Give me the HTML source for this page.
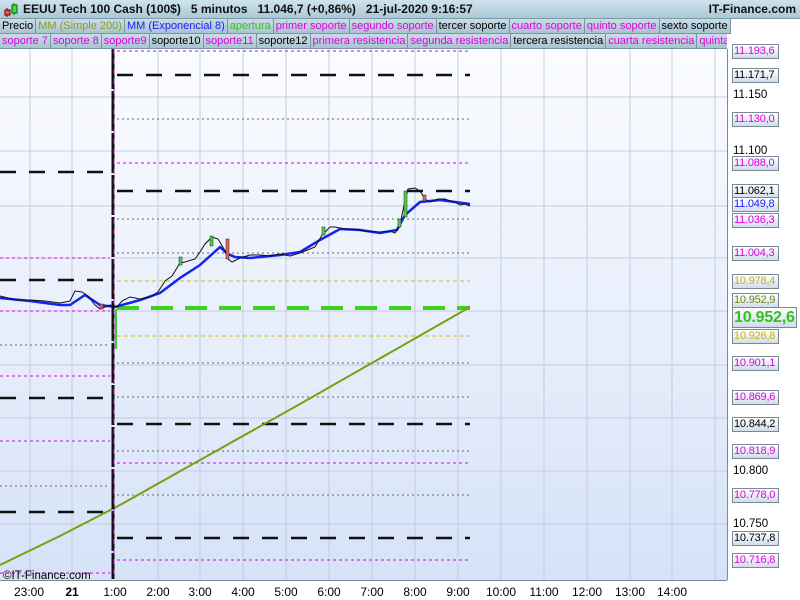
<!DOCTYPE html>
<html><head><meta charset="utf-8"><style>
*{margin:0;padding:0;box-sizing:border-box}
body{width:800px;height:600px;overflow:hidden;background:#fff;font-family:"Liberation Sans",sans-serif;position:relative}
.hdr{position:absolute;left:0;top:0;width:800px;height:19px;background:linear-gradient(#cfe3ec,#a9c8d6);border-bottom:1px solid #7f9aa8;font-weight:bold;font-size:12px;line-height:19px;color:#111}
.row{position:absolute;left:0;height:15px;display:flex;font-size:11px;line-height:14px}
.row span{background:linear-gradient(#c9dde6,#a8c4d1);border-right:1px solid #7a95a2;border-bottom:1px solid #7a95a2;padding:0 2px;white-space:nowrap}
.m{color:#e000e0}.k{color:#000}
.ax{position:absolute;font-size:11.5px;color:#000}
.lb{position:absolute;left:732px;width:47px;height:15px;border:1px solid #7a8a94;background:linear-gradient(#fff,#d2dcec);font-size:11px;line-height:13px;padding-left:1px;letter-spacing:-0.2px;white-space:nowrap;overflow:hidden}
.tl{position:absolute;top:585px;font-size:12px;transform:translateX(-50%)}
</style></head><body>
<div class="hdr"><svg style="position:absolute;left:3px;top:2px" width="16" height="16"><line x1="4" y1="6" x2="4" y2="15" stroke="#600"/><rect x="2" y="8" width="5" height="5" fill="#e55" stroke="#600"/><line x1="11" y1="1" x2="11" y2="13" stroke="#060"/><rect x="9" y="3" width="5" height="8" fill="#4d4" stroke="#060"/></svg><span style="position:absolute;left:23px">EEUU Tech 100 Cash (100$)&nbsp;&nbsp;&nbsp;5 minutos&nbsp;&nbsp;&nbsp;11.046,7 (+0,86%)&nbsp;&nbsp;&nbsp;21-jul-2020 9:16:57</span><span style="position:absolute;right:4px">IT-Finance.com</span></div>
<div class="row" style="top:19px"><span class="k">Precio</span><span style="color:#8a9e1e">MM (Simple 200)</span><span style="color:#1a1aff">MM (Exponencial 8)</span><span style="color:#2fc21a">apertura</span><span class="m">primer soporte</span><span class="m">segundo soporte</span><span class="k">tercer soporte</span><span class="m">cuarto soporte</span><span class="m">quinto soporte</span><span class="k">sexto soporte</span></div>
<div class="row" style="top:34px;width:727px;overflow:hidden"><span class="m">soporte 7</span><span class="m">soporte 8</span><span class="m">soporte9</span><span class="k">soporte10</span><span class="m">soporte11</span><span class="k">soporte12</span><span class="m">primera resistencia</span><span class="m">segunda resistencia</span><span class="k">tercera resistencia</span><span class="m">cuarta resistencia</span><span class="m">quinta resistencia</span></div>
<svg style="position:absolute;left:0;top:49px" width="800" height="551">
<defs><linearGradient id="bg" x1="0" y1="0" x2="0" y2="1"><stop offset="0" stop-color="#fbfcff"/><stop offset="1" stop-color="#d6e2f8"/></linearGradient></defs>
<rect x="0" y="0" width="727" height="531" fill="url(#bg)"/>
<line x1="727.5" y1="0" x2="727.5" y2="531" stroke="#7d8a94"/>
<line x1="0" y1="531.5" x2="727" y2="531.5" stroke="#7d8a94"/>
<g stroke="#c3cce0" stroke-width="1">
<path d="M0 48H727M0 102H727M0 157H727M0 209H727M0 262H727M0 316H727M0 369H727M0 422H727M0 475H727"/>
<path d="M30 0V531M72 0V531M158 0V531M200 0V531M243 0V531M286 0V531M329 0V531M372 0V531M415 0V531M458 0V531M501 0V531M544 0V531M587 0V531M630 0V531M672 0V531M715 0V531"/>
</g>
<g fill="none">
<g stroke="#e000e0" stroke-dasharray="3,3"><path d="M117 2H470M117 114H470M117 414H470M117 511H470M0 209H110M0 262H110M0 327H110M0 392H110M0 524H110"/></g>
<g stroke="#666" stroke-dasharray="2,3"><path d="M117 70H470M117 170H470M117 204H470M117 314H470M117 348H470M117 402H470M117 446H470M0 296H110M0 437H110"/></g>
<g stroke="#d0c000" stroke-dasharray="4,3"><path d="M117 232H470M117 287H470"/></g>
<g stroke="#111" stroke-width="2.5" stroke-dasharray="16,13"><path d="M117 26H470M117 142H470M117 375H470M117 489H470M0 123H110M0 231H110M0 349H110M0 463H110"/></g>
<path d="M117 259H470" stroke="#3bd11c" stroke-width="4" stroke-dasharray="22,12"/>
<path d="M0 516L60 487L120 456L200 411L300 355L400 298L470 258" stroke="#7aa010" stroke-width="2"/>
<path d="M0 249L30 252L60 256L70 256L85 246L100 256L115 258L140 251L160 244L180 229L200 216L220 198L228 205L235 208L250 209L280 206L300 203L320 191L340 180L360 181L380 184L397 181L405 166L420 153L440 151L470 155" stroke="#1525f0" stroke-width="2.5"/>
<path d="M0 247L8 249L15 251L30 251L45 252L60 254L70 252L75 242L82 243L88 247L95 256L100 260L105 258L110 256L117 258L122 252L130 248L140 250L150 248L158 243L165 232L172 227L180 214L185 213L195 210L200 203L205 195L212 188L218 190L224 200L228 210L232 213L240 209L250 206L260 206L270 207L280 205L290 207L300 204L310 200L315 198L322 186L330 178L335 178L345 180L355 180L365 182L380 183L390 182L395 184L400 175L405 152L408 140L415 139L420 142L425 150L430 153L438 150L445 150L450 152L455 153L460 156L465 155L470 157" stroke="#111" stroke-width="1"/>
<path d="M113 0V530" stroke="#111" stroke-width="3" stroke-dasharray="40,2"/>
<path d="M114 0V530" stroke="#e000e0" stroke-width="1" stroke-dasharray="5,5"/>
<path d="M116 260V300" stroke="#3bd11c" stroke-width="2"/>
</g>
<g fill="#4fd04a" stroke="#222" stroke-width="0.5"><rect x="404" y="142" width="3" height="26"/><rect x="398" y="170" width="3" height="8"/><rect x="322" y="178" width="3" height="8"/><rect x="210" y="187" width="3" height="10"/><rect x="179" y="208" width="3" height="8"/></g>
<g fill="#e56060" stroke="#222" stroke-width="0.5"><rect x="226" y="190" width="3" height="20"/><rect x="423" y="146" width="3" height="6"/><rect x="100" y="255" width="3" height="5"/></g>
<text x="3" y="530" font-size="11.5" font-family="Liberation Sans">©IT-Finance.com</text>
</svg>
<div class="ax" style="left:733px;top:89px">11.150</div>
<div class="ax" style="left:733px;top:145px">11.100</div>
<div class="ax" style="left:733px;top:465px">10.800</div>
<div class="ax" style="left:733px;top:518px">10.750</div>
<div class="lb m" style="top:44px">11.193,6</div>
<div class="lb k" style="top:68px">11.171,7</div>
<div class="lb m" style="top:112px">11.130,0</div>
<div class="lb m" style="top:156px">11.088,0</div>
<div class="lb k" style="top:184px">11.062,1</div>
<div class="lb" style="top:197px;color:#1a1aff">11.049,8</div>
<div class="lb m" style="top:213px">11.036,3</div>
<div class="lb m" style="top:246px">11.004,3</div>
<div class="lb" style="top:274px;color:#c8b400">10.978,4</div>
<div class="lb" style="top:293px;color:#6b8a10">10.952,9</div>
<div class="lb" style="top:307px;width:65px;height:21px;font-size:16px;font-weight:bold;line-height:19px;color:#2fc21a">10.952,6</div>
<div class="lb" style="top:329px;color:#c8b400">10.926,8</div>
<div class="lb m" style="top:356px">10.901,1</div>
<div class="lb m" style="top:390px">10.869,6</div>
<div class="lb k" style="top:417px">10.844,2</div>
<div class="lb m" style="top:444px">10.818,9</div>
<div class="lb m" style="top:488px">10.778,0</div>
<div class="lb k" style="top:531px">10.737,8</div>
<div class="lb m" style="top:553px">10.716,8</div>
<div class="tl" style="left:29px">23:00</div><div class="tl" style="left:72px;font-weight:bold">21</div><div class="tl" style="left:115px">1:00</div><div class="tl" style="left:158px">2:00</div><div class="tl" style="left:200px">3:00</div><div class="tl" style="left:243px">4:00</div><div class="tl" style="left:286px">5:00</div><div class="tl" style="left:329px">6:00</div><div class="tl" style="left:372px">7:00</div><div class="tl" style="left:415px">8:00</div><div class="tl" style="left:458px">9:00</div><div class="tl" style="left:501px">10:00</div><div class="tl" style="left:544px">11:00</div><div class="tl" style="left:587px">12:00</div><div class="tl" style="left:630px">13:00</div><div class="tl" style="left:672px">14:00</div>
</body></html>
